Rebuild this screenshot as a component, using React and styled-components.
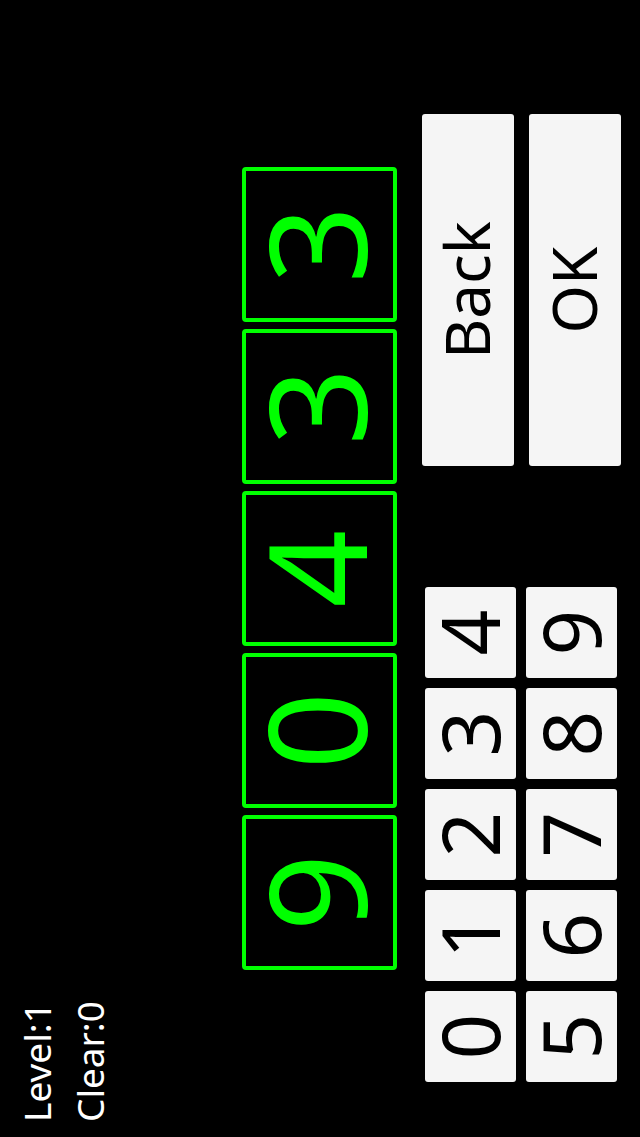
import React from "react";
import styled, { createGlobalStyle } from "styled-components";

const GlobalStyle = createGlobalStyle`
  html {
    background: #000;
    overflow: hidden;
  }
  body {
    margin: 0;
    padding: 0;
    min-height: 1137px;
    background: #000;
    font-family: "Noto Sans", "Open Sans", sans-serif;
  }
`;

// the game is a landscape screen shown on a phone held upright,
// so the whole stage is turned a quarter turn to the left
const Stage = styled.div`
  width: 1137px;
  height: 640px;
  transform-origin: top left;
  transform: translateY(1137px) rotate(-90deg);
  display: flex;
  flex-direction: column;
  background: #000;
`;

const Status = styled.div`
  margin: 10px 0 0 15px;
  color: #fff;
  font-size: 37px;
  line-height: 53px;
`;

const DigitRow = styled.div`
  display: flex;
  gap: 7px;
  margin: 126px 0 0 167px;
`;

const DigitBox = styled.div`
  box-sizing: border-box;
  width: 155px;
  height: 155px;
  border: 4px solid #00ff00;
  border-radius: 4px;
  display: flex;
  align-items: center;
  justify-content: center;
  padding-bottom: 10px;
  color: #00ff00;
  font-size: 136px;
  line-height: 1;
`;

const Controls = styled.div`
  display: flex;
  align-items: flex-start;
  margin: 25px 0 0 55px;
`;

const Keypad = styled.div`
  display: grid;
  grid-template-columns: repeat(5, 91px);
  grid-auto-rows: 91px;
  gap: 10px;
  margin-top: 3px;
`;

const Key = styled.button`
  box-sizing: border-box;
  margin: 0;
  padding: 0 0 4px;
  border: none;
  border-radius: 3px;
  background: #f5f5f5;
  color: #000;
  font-family: inherit;
  font-size: 80px;
  line-height: 1;
  display: flex;
  align-items: center;
  justify-content: center;
`;

const Actions = styled.div`
  display: flex;
  flex-direction: column;
  gap: 15px;
  margin-left: 121px;
`;

const ActionButton = styled.button`
  box-sizing: border-box;
  width: 352px;
  height: 92px;
  margin: 0;
  padding: 0 0 4px;
  border: none;
  border-radius: 3px;
  background: #f5f5f5;
  color: #000;
  font-family: inherit;
  font-size: 62px;
  line-height: 1;
`;

const digits = ["9", "0", "4", "3", "3"];
const keys = ["0", "1", "2", "3", "4", "5", "6", "7", "8", "9"];

export default function App() {
  return (
    <>
      <GlobalStyle />
      <Stage>
        <Status>
          <div>Level:1</div>
          <div>Clear:0</div>
        </Status>
        <DigitRow>
          {digits.map((d, i) => (
            <DigitBox key={i}>{d}</DigitBox>
          ))}
        </DigitRow>
        <Controls>
          <Keypad>
            {keys.map((k) => (
              <Key key={k}>{k}</Key>
            ))}
          </Keypad>
          <Actions>
            <ActionButton>Back</ActionButton>
            <ActionButton>OK</ActionButton>
          </Actions>
        </Controls>
      </Stage>
    </>
  );
}
